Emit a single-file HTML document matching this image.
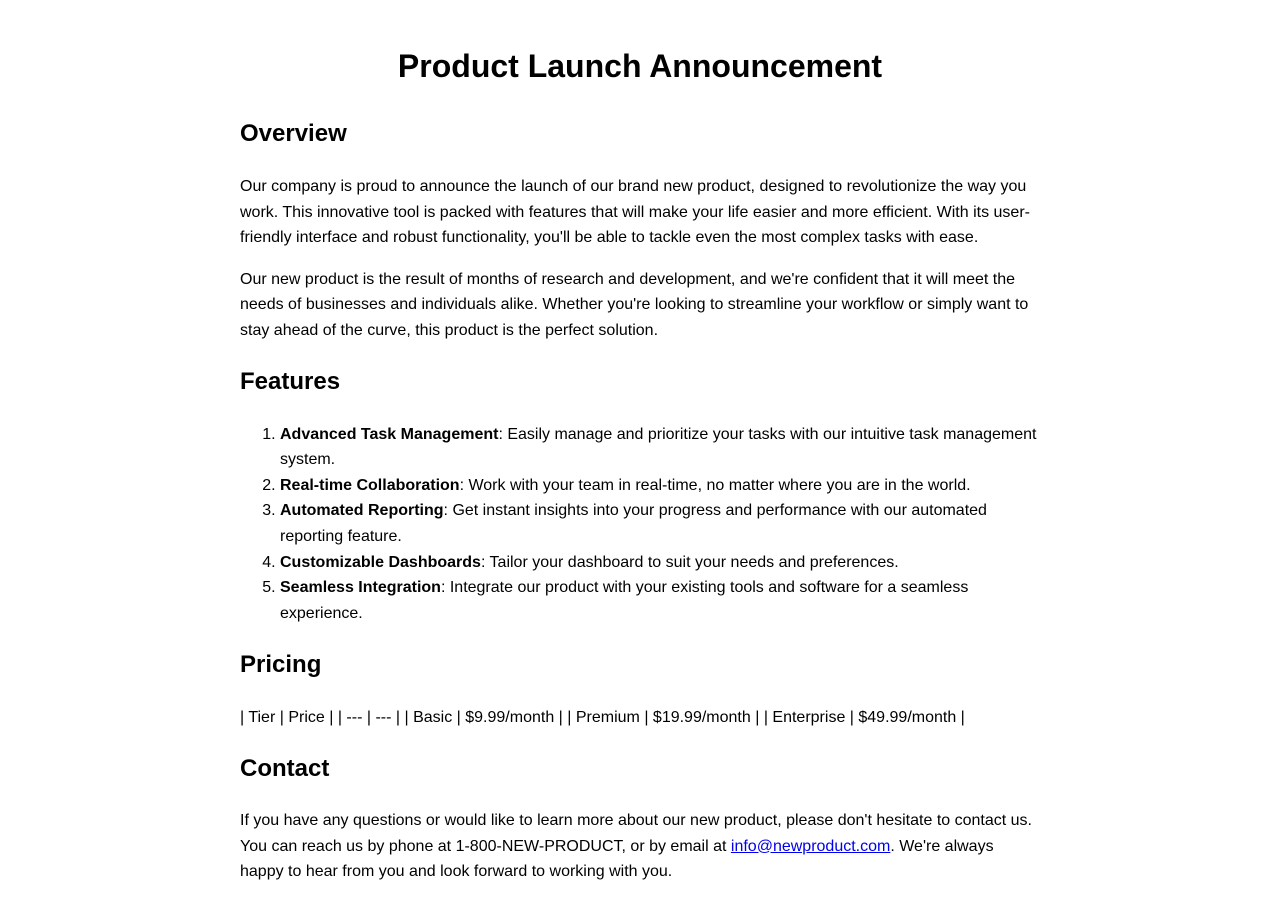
<!DOCTYPE html>
<html><head><meta charset="utf-8"><style>
body{margin:0;background:#fff;font-family:"Liberation Sans",Arial,sans-serif;color:#000;}
.c{width:800px;margin:0 auto;padding-top:26px;}
h1{text-align:center;font-size:32px;margin:20px 0 28px;line-height:40px;}
h2{font-size:24px;margin:0 0 20px;line-height:40px;}
p{font-size:16px;line-height:25.6px;margin:0 0 16px;}
ol{font-size:16px;line-height:25.6px;margin:0 0 16px;padding-left:40px;}
a{color:#00e;}
</style></head><body><div class="c">
<h1>Product Launch Announcement</h1>
<h2>Overview</h2>
<p>Our company is proud to announce the launch of our brand new product, designed to revolutionize the way you work. This innovative tool is packed with features that will make your life easier and more efficient. With its user-friendly interface and robust functionality, you'll be able to tackle even the most complex tasks with ease.</p>
<p>Our new product is the result of months of research and development, and we're confident that it will meet the needs of businesses and individuals alike. Whether you're looking to streamline your workflow or simply want to stay ahead of the curve, this product is the perfect solution.</p>
<h2 style="margin-top:18px">Features</h2>
<ol>
<li><b>Advanced Task Management</b>: Easily manage and prioritize your tasks with our intuitive task management system.</li>
<li><b>Real-time Collaboration</b>: Work with your team in real-time, no matter where you are in the world.</li>
<li><b>Automated Reporting</b>: Get instant insights into your progress and performance with our automated reporting feature.</li>
<li><b>Customizable Dashboards</b>: Tailor your dashboard to suit your needs and preferences.</li>
<li><b>Seamless Integration</b>: Integrate our product with your existing tools and software for a seamless experience.</li>
</ol>
<h2 style="margin-top:19px">Pricing</h2>
<p>| Tier | Price | | --- | --- | | Basic | $9.99/month | | Premium | $19.99/month | | Enterprise | $49.99/month |</p>
<h2 style="margin-top:18px;margin-bottom:19px">Contact</h2>
<p>If you have any questions or would like to learn more about our new product, please don't hesitate to contact us. You can reach us by phone at 1-800-NEW-PRODUCT, or by email at <a href="#">info@newproduct.com</a>. We're always happy to hear from you and look forward to working with you.</p>
</div></body></html>
